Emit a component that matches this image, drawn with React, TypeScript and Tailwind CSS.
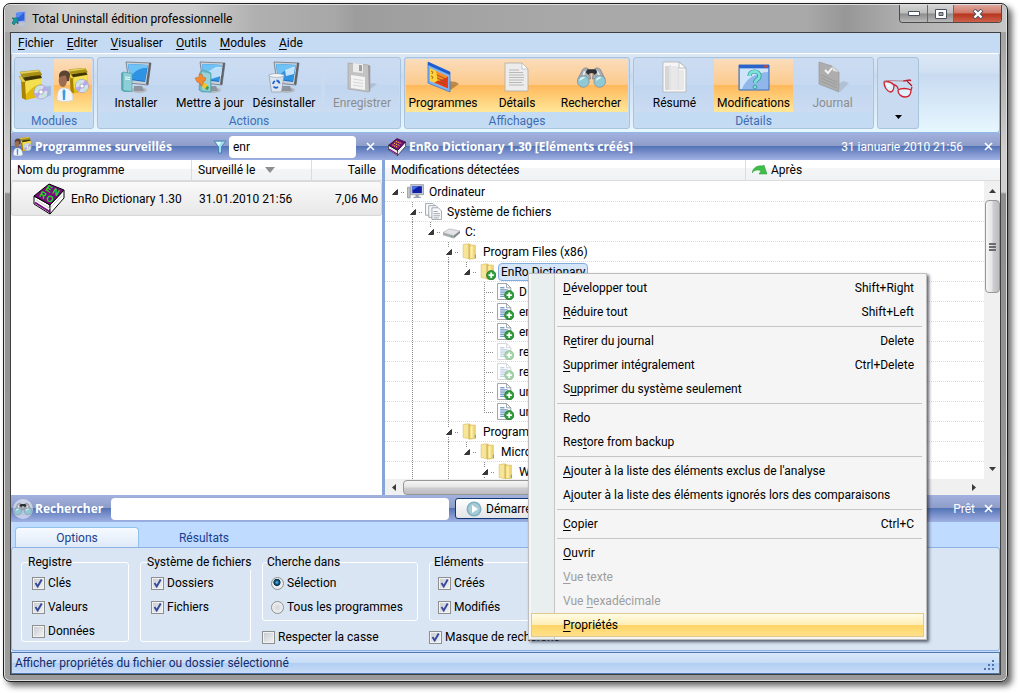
import { useState } from "react";
import type { ReactNode } from "react";
import clsx from "clsx";

/* ---------- helpers ---------- */

// "&" marks the access key of a label
function Accel({ text }: { text: string }) {
  const i = text.indexOf("&");
  if (i < 0) return <span>{text}</span>;
  return (
    <span>
      {text.slice(0, i)}
      <u className="underline-offset-2">{text[i + 1]}</u>
      {text.slice(i + 2)}
    </span>
  );
}

const barClass =
  "bg-[linear-gradient(to_bottom,#a3b1df_0%,#8e9dc8_47%,#5474b8_50%,#7d93cd_75%,#9fb1e3_100%)]";
const barTitle = "whitespace-nowrap font-['Open_Sans',sans-serif] text-[12px] font-bold text-white";

/* ---------- icons ---------- */

function AppIcon() {
  return (
    <svg width="16" height="16" viewBox="0 0 16 16">
      <path d="M4 1l11-1v11l-11 1z" fill="#9fb4ee" />
      <path d="M5.500 2l8-1v8.500l-8 1z" fill="#2f62d8" />
      <path d="M5.500 2l8-1-8 7z" fill="#5c8cf0" />
      <path d="M8 12l4-.5 3 2.500-4 1.500-4-1z" fill="#b9c4d8" />
      <path d="M1 7h6v6l-2-2-2 3-2-2 2-3z" fill="#159a9d" stroke="#0b5e66" strokeWidth=".6" />
    </svg>
  );
}

function Monitor() {
  return (
    <g>
      <ellipse cx="20" cy="29" rx="8" ry="3" fill="#b4b9c0" />
      <path d="M15 25h8l2 5-10 0z" fill="#8d949d" />
      <path d="M7 1l25 1-3 22-19-2z" fill="#c9d0d6" stroke="#6d757e" strokeWidth=".8" />
      <path d="M29 24l3-22-2 0-3 21z" fill="#5b626b" />
      <path d="M9 3l20 1-3 17-15-2z" fill="#1c73c8" />
      <path d="M9 3l20 1-.4 3c-8 0-14 4-17.600 10z" fill="#6ec2f5" />
      <path d="M12 16c4-7 10-9 16-9l-2 13-14-2z" fill="#2f93e4" />
    </g>
  );
}

function InstallIcon() {
  return (
    <svg width="34" height="33" viewBox="0 0 34 33">
      <Monitor />
      <path d="M2 12l2-1 9 2v18l-8 0-3-2z" fill="#5fb0b8" />
      <path d="M4 11l9 1.500v18l-9-1z" fill="#8ccfd6" stroke="#4a98a2" strokeWidth=".6" />
      <path d="M6 16l5 .5M6 18l5 .5" stroke="#e9fbfc" />
    </svg>
  );
}

function UpdateIcon() {
  return (
    <svg width="34" height="33" viewBox="0 0 34 33">
      <Monitor />
      <path d="M16 10l7-4 6 0-1 9-10 3z" fill="#dff0fd" opacity=".8" />
      <path d="M7 11l3-2 8 3v19l-9 0-3-2z" fill="#6fb9c4" stroke="#4b95a0" strokeWidth=".6" />
      <path d="M9 11l8 2v17l-8-1z" fill="#98d3dc" />
      <path d="M2 17l4-1 0-3 3 0 1 3 3 1-1 3-2 0 1 4-3 1-1-3-3-1z" fill="#f08a35" stroke="#c8611b" strokeWidth=".5" />
      <path d="M11 22l3 1 1 3-3 2-3-2z" fill="#f3c52c" />
      <path d="M14 25l2 1-1 3-3-1z" fill="#3a9e48" />
    </svg>
  );
}

function UninstallIcon() {
  return (
    <svg width="34" height="33" viewBox="0 0 34 33">
      <Monitor />
      <path d="M18 9l8-3 2 0-1 7-8 2z" fill="#e3f2fe" opacity=".85" />
      <path d="M2 14h15l-2.500 17h-10z" fill="#dfe6ee" fillOpacity=".93" stroke="#8f9aa8" strokeWidth=".7" />
      <ellipse cx="9.500" cy="14.500" rx="7.500" ry="1.800" fill="#f5f8fb" stroke="#8f9aa8" strokeWidth=".6" />
      <path d="M9.500 19.500a3.500 3.500 0 0 1 3 3M11 26a3.500 3.500 0 0 1-4.500-.5M6 23a3.500 3.500 0 0 1 2-3" fill="none" stroke="#1f63d2" strokeWidth="1.800" />
    </svg>
  );
}

function FloppyIcon() {
  return (
    <svg width="34" height="33" viewBox="0 0 34 33">
      <path d="M24 29l8-6-4-1-5 1z" fill="#a9b6c9" opacity=".7" />
      <path d="M3 2l20 2 2 1v25l-1 1-21-3z" fill="#c2c2c2" stroke="#a3a3a3" strokeWidth=".7" />
      <path d="M23 4l2 1v25l-1 1z" fill="#9a9a9a" />
      <path d="M8 2l10 1v9l-10-1z" fill="#ececec" />
      <path d="M14 4l3 .3v6l-3-.3z" fill="#9f9f9f" />
      <path d="M6 14l14 2v13l-14-2z" fill="#f3f3f3" />
      <path d="M8 18l10 1.500M8 21l10 1.500M8 24l10 1.500" stroke="#cfcfcf" strokeWidth=".8" />
    </svg>
  );
}

function ProgramsIcon() {
  return (
    <svg width="34" height="33" viewBox="0 0 34 33">
      <path d="M23 30l10-7-3-2-8-1z" fill="#a77438" opacity=".75" />
      <path d="M2 1l22 10v20l-22-9z" fill="#7fb4f2" stroke="#3a78d0" strokeWidth=".8" />
      <path d="M2 1l22 10v3l-22-10z" fill="#1d5bd0" />
      <path d="M4 7l18 8.500v12l-18-7.500z" fill="#ffd33b" />
      <path d="M22 15.500v12l-14-6z" fill="#e8391b" />
      <path d="M10 10l12 5.500-10 5z" fill="#f98a2b" />
      <path d="M5 10l2 1-1 2M5 15l2 1-1 2M11 14l9 4M11 17l9 4M11 20l9 4" fill="none" stroke="#8f5510" strokeWidth=".8" />
    </svg>
  );
}

function DetailsIcon() {
  return (
    <svg width="34" height="33" viewBox="0 0 34 33">
      <path d="M5 2h17l6 6v22h-23z" fill="#ececec" stroke="#b0aca6" strokeWidth=".8" />
      <path d="M22 2l6 6h-6z" fill="#fff" stroke="#b5b5b5" strokeWidth=".7" />
      <path d="M9 9h10M9 11.500h14M9 14h15M9 16.500h15M9 19h15M9 21.500h13M9 24h15" stroke="#b2b2b2" strokeWidth=".9" />
    </svg>
  );
}

function Binoculars({ size }: { size: number }) {
  return (
    <svg width={size} height={size} viewBox="0 0 34 33">
      <path d="M7 10c1-4 7-5 8 0l1 8-13 0z" fill="#a7adb3" stroke="#70777e" strokeWidth=".7" />
      <path d="M19 10c1-5 7-4 8 0l4 8-13 0z" fill="#a7adb3" stroke="#70777e" strokeWidth=".7" />
      <path d="M9 10l2 0-2 7-2 0zM22 10h2l3 7h-2z" fill="#e8ecef" />
      <path d="M13 8h8l2 3-3 3-1-2h-4l-1 2-3-3z" fill="#2d3034" />
      <circle cx="8.500" cy="20.500" r="6" fill="#8fc9d6" stroke="#8d979e" strokeWidth="1" />
      <circle cx="25.500" cy="20.500" r="6" fill="#8fc9d6" stroke="#8d979e" strokeWidth="1" />
      <path d="M4.500 20a4 4 0 0 1 6-3.500zM21.500 20a4 4 0 0 1 6-3.500z" fill="#dcf4f8" />
    </svg>
  );
}

function SummaryIcon() {
  return (
    <svg width="34" height="33" viewBox="0 0 34 33">
      <path d="M5 1h16l7 6v24h-23z" fill="#f6f6f6" stroke="#b4b4b4" strokeWidth=".8" />
      <path d="M21 1l7 6h-7z" fill="#fff" stroke="#a6a6a6" strokeWidth=".7" />
      <path d="M7 5h4v24h-4z" fill="#d6d6d6" />
      <path d="M13 5h6v24h-6zM21 9h5v20h-5z" fill="#e8e8e8" />
      <path d="M12 4v25M20 6v23" stroke="#c6c6c6" strokeWidth=".8" />
    </svg>
  );
}

function ChangesIcon() {
  return (
    <svg width="34" height="33" viewBox="0 0 34 33">
      <path d="M2 4h30v25h-30z" fill="#8fb7ea" stroke="#3d6fbd" strokeWidth="1" />
      <path d="M2 4h30v3h-30z" fill="#2a63cc" />
      <path d="M27 4.500h4v2h-4z" fill="#d9442a" />
      <path d="M3 8h28v3c-14 1-22 7-26 17h-2z" fill="#cfe3fa" />
      <path d="M12.500 15c0-6 10-6 10 0 0 4-4.500 3-4.500 7" fill="none" stroke="#2f8f94" strokeWidth="4.200" />
      <path d="M12.500 15c0-6 10-6 10 0 0 4-4.500 3-4.500 7" fill="none" stroke="#7be4d8" strokeWidth="2.800" />
      <circle cx="18" cy="26" r="1.900" fill="#7be4d8" stroke="#2f8f94" strokeWidth=".8" />
    </svg>
  );
}

function JournalIcon() {
  return (
    <svg width="34" height="33" viewBox="0 0 34 33">
      <path d="M24 31l9-9-5-2-5 2z" fill="#aab6c8" opacity=".7" />
      <path d="M3 1l13 4 7 6v20l-20-8z" fill="#adadad" stroke="#999" strokeWidth=".7" />
      <path d="M16 5l7 6-6-1z" fill="#dedede" />
      <path d="M9 9l3 3 4-5" fill="none" stroke="#f4f4f4" strokeWidth="2" />
      <path d="M5 14l16 7M5 17l16 7M5 20l16 7" stroke="#9a9a9a" strokeWidth=".9" />
    </svg>
  );
}

function GlassesIcon() {
  return (
    <svg width="32" height="24" viewBox="0 0 32 24">
      <g fill="#dff1fb" stroke="#cf2130" strokeWidth="1.300">
        <path d="M2 5c3-1 7 0 10 3 0 4-1 7-4 7-3-1-6-5-6-10z" />
        <path d="M16 13c3-2 9-2 13 0 0 4-2 7-6 7-4 0-7-3-7-7z" />
        <path d="M12 8c2 0 4 2 4 4M21 4l7-1 1 1M24 3l6 6M29 13l1-3" fill="none" />
      </g>
      <path d="M2 4c7-1 12 0 20 0" fill="none" stroke="#b9858f" strokeWidth="1" />
      <path d="M24 3l6 6" stroke="#8c1b26" strokeWidth="1" />
      <path d="M4 6l5 3-4 1z" fill="#fff" />
    </svg>
  );
}

function BoxShape() {
  return (
    <g>
      <path d="M2 8l5 3v19l-4-2z" fill="#a98200" />
      <path d="M6 11l17-3v18l-16 4z" fill="#e0b90a" />
      <path d="M6 11l17-3v6c-7 1-12 5-16 11z" fill="#f3df4f" />
      <path d="M2 8l19-4 2 4-17 3z" fill="#3f3403" />
      <path d="M1 2l19-2 3 5-20 2z" fill="#a89112" stroke="#8a7509" strokeWidth=".4" />
      <path d="M1 2l19-2 .8 1.500-19 2.500z" fill="#e3cf58" />
      <path d="M0 6l3 1 4 5-4 0z" fill="#e9d24a" stroke="#ad9210" strokeWidth=".4" />
    </g>
  );
}

function Disc() {
  return (
    <g>
      <circle r="7" fill="#d9dcf2" stroke="#9a9fc4" strokeWidth=".7" />
      <path d="M0 0l-6-3a7 7 0 0 1 4-3.500zM0 0l6 3a7 7 0 0 1-4 3.500z" fill="#c2e6d6" />
      <path d="M0 0l3-6a7 7 0 0 1 3.500 4.500zM0 0l-3 6a7 7 0 0 1-3.500-4.500z" fill="#b3a8ea" />
      <circle r="2.200" fill="#fff" stroke="#8b8fa5" strokeWidth=".7" />
    </g>
  );
}

function BoxIcon() {
  return (
    <svg width="34" height="34" viewBox="0 0 34 34">
      <path d="M25 19l8-1v9l-8 4z" fill="#8fa6c8" opacity=".6" />
      <g transform="translate(1 2)">
        <BoxShape />
      </g>
      <g transform="translate(23 24)">
        <Disc />
      </g>
    </svg>
  );
}

function UserBoxIcon({ size }: { size: number }) {
  return (
    <svg width={size} height={size} viewBox="0 0 34 34">
      <g transform="translate(12 0) scale(.85)">
        <BoxShape />
      </g>
      <g transform="translate(26 18) scale(.95)">
        <Disc />
      </g>
      <path d="M1 32c0-9 2-12 7-12s9 3 9 12c-4 2-12 2-16 0z" fill="#f2f5fa" stroke="#c4ccd8" strokeWidth=".6" />
      <path d="M8 21l1.500 2-.5 9h-2l-.5-9z" fill="#3c9ae0" />
      <path d="M3 8c0-7 11-7 11-1l-1 6-9 1z" fill="#5b4334" />
      <path d="M3 10c2-2 5-3 7-2 2 5 0 11-3 11s-5-4-4-9z" fill="#9c6d50" />
    </svg>
  );
}

function BookIcon({ size, letters = false }: { size: number; letters?: boolean }) {
  return (
    <svg width={size} height={size} viewBox="0 0 32 32">
      <path d="M1 13l16 9v9l-16-10z" fill="#fff" stroke="#000" strokeWidth="1" />
      <path d="M17 22l14-15v8l-14 16z" fill="#fff" stroke="#000" strokeWidth="1" />
      <path d="M2 19.500l15 9.500" stroke="#7b0a7f" strokeWidth="2" />
      <path d="M3 17l14 8.500 12-13" fill="none" stroke="#b5b5b5" strokeWidth=".8" />
      <path d="M1 13l15-12 15 6-14 15z" fill="#7b0a7f" stroke="#000" strokeWidth="1" />
      {letters ? (
        <g
          fill="#18e218"
          fontFamily="Liberation Sans, sans-serif"
          fontWeight="700"
          fontSize="9"
          textAnchor="middle"
          dominantBaseline="central"
        >
          <text transform="translate(16 6) rotate(30)">E</text>
          <text transform="translate(23 9) rotate(30)">N</text>
          <text transform="translate(10 12) rotate(30)">R</text>
          <text transform="translate(17 16) rotate(30)">O</text>
        </g>
      ) : (
        <path d="M14 6l10 4M11 9l10 5M8 12l10 5" stroke="#f2e22c" strokeWidth="2" strokeDasharray="2 1.500" />
      )}
    </svg>
  );
}

function FunnelIcon() {
  return (
    <svg width="14" height="14" viewBox="0 0 14 14">
      <path d="M1 1h12l-4.500 6v6h-3v-6z" fill="#9fdcf0" stroke="#3f7fae" strokeWidth=".9" />
      <path d="M3 2h5l-2 4z" fill="#e9fbff" />
    </svg>
  );
}

function CloseGlyph() {
  return (
    <svg width="9" height="9" viewBox="0 0 9 9">
      <path d="M1 1l7 7M8 1l-7 7" stroke="#fff" strokeWidth="1.600" />
    </svg>
  );
}

function GreenArrow() {
  return (
    <svg width="16" height="10" viewBox="0 0 16 10">
      <path d="M0 8c1-5 5-8 10-7l2-1 3 9h-8l2-3c-3-2-7-1-9 2z" fill="#3fbf4a" stroke="#2b9636" strokeWidth=".5" />
    </svg>
  );
}

function PlusBadge() {
  return (
    <g>
      <circle cx="11.500" cy="11.500" r="4.400" fill="#2e9e3a" stroke="#1b7427" strokeWidth=".7" />
      <path d="M11.500 9v5M9 11.500h5" stroke="#fff" strokeWidth="1.700" />
    </g>
  );
}

function FolderShape() {
  return (
    <g>
      <path d="M2 1.500l5-.8v14l-5-1z" fill="#f7e69a" stroke="#d3b455" strokeWidth=".5" />
      <path d="M7 .7h2v14.500h-2z" fill="#dfc05c" />
      <path d="M8 2h5.500v12.500l-5.500.8z" fill="#f2d976" stroke="#cfae4c" strokeWidth=".5" />
      <path d="M9 3h2v11h-2z" fill="#faeeb4" />
      <path d="M13 11h1v3h-1z" fill="#5ea0d8" />
    </g>
  );
}

type TreeIconKind = "pc" | "pages" | "drive" | "folder" | "folderAdd" | "file" | "fileDim";

function TreeIcon({ kind }: { kind: TreeIconKind }) {
  return (
    <svg width="17" height="17" viewBox="0 0 16 16" className={clsx("shrink-0", kind === "fileDim" && "opacity-45")}>
      {kind === "pc" && (
        <g>
          <path d="M.5 4h2.500v10h-2.500z" fill="#c4c8cf" stroke="#7c828c" strokeWidth=".6" />
          <path d="M3.500 1.500h12v9.500h-12z" fill="#c9cdd6" stroke="#7c828c" strokeWidth=".6" />
          <path d="M5 3h9v6.500h-9z" fill="#0f1fa8" />
          <path d="M5 3h6l-6 4z" fill="#4a70e8" />
          <path d="M8 11h3v2h2v1h-7v-1h2z" fill="#9aa0ab" />
        </g>
      )}
      {kind === "pages" && (
        <g fill="#f7f9fb" stroke="#8a9099" strokeWidth=".7">
          <path d="M.5.500h7l1 1v10h-8z" />
          <path d="M3.500 2.500h7l1 1v10h-8z" />
          <path d="M6.500 4.500h6l3 3v8h-9z" />
          <path d="M8 8h4M8 10h6M8 12h6M8 14h5" />
        </g>
      )}
      {kind === "drive" && (
        <g>
          <path d="M0 9l6-3.500 10 2-6 4.500z" fill="#e2e4e6" stroke="#9b9fa4" strokeWidth=".5" />
          <path d="M0 9l10 3v2.500l-10-3z" fill="#a9adb2" />
          <path d="M10 12l6-4.500v2l-6 5z" fill="#7f8388" />
          <path d="M7.500 12.300l1.500.5" stroke="#3fc04a" strokeWidth="1" />
        </g>
      )}
      {kind === "folder" && <FolderShape />}
      {kind === "folderAdd" && (
        <g>
          <FolderShape />
          <PlusBadge />
        </g>
      )}
      {(kind === "file" || kind === "fileDim") && (
        <g>
          <path d="M.5.500h8.500l4 4v11h-12.500z" fill="#fff" stroke="#8f959d" strokeWidth=".8" />
          <path d="M9 .5v4h4" fill="none" stroke="#8f959d" strokeWidth=".8" />
          <path d="M3 4.500h4M3 6.500h7M3 8.500h6M3 10.500h4M3 12.500h4" stroke="#3b6fb4" strokeWidth=".9" />
          <PlusBadge />
        </g>
      )}
    </svg>
  );
}

/* ---------- tree ---------- */

// one guide per indent level: _ empty, | line, T branch, L last branch,
// a arrow, u arrow with line above, b arrow with line above and below
function Guide({ kind }: { kind: string }) {
  const dots = { stroke: "#8a8a8a", strokeDasharray: "1 1", strokeWidth: 1 };
  return (
    <svg width="18" height="20" viewBox="0 0 18 20" className="shrink-0">
      {(kind === "|" || kind === "T") && <path d="M8.500 0v20" {...dots} />}
      {kind === "L" && <path d="M8.500 0v11" {...dots} />}
      {(kind === "T" || kind === "L") && <path d="M10 10.500h8" {...dots} />}
      {(kind === "u" || kind === "b") && <path d="M8.500 0v5" {...dots} />}
      {kind === "b" && <path d="M8.500 15v5" {...dots} />}
      {"aub".includes(kind) && (
        <>
          <path d="M11.500 7.500v5h-5z" fill="#3a3a3a" stroke="#1c1c1c" strokeWidth=".8" />
          <path d="M15 10.500h3" {...dots} />
        </>
      )}
    </svg>
  );
}

type Node = { guides: string; icon: TreeIconKind; label: string; selected?: boolean };

const tree: Node[] = [
  { guides: "a", icon: "pc", label: "Ordinateur" },
  { guides: "_b", icon: "pages", label: "Système de fichiers" },
  { guides: "_|u", icon: "drive", label: "C:" },
  { guides: "_|_b", icon: "folder", label: "Program Files (x86)" },
  { guides: "_|_|u", icon: "folderAdd", label: "EnRo Dictionary", selected: true },
  { guides: "_|_|_T", icon: "file", label: "D" },
  { guides: "_|_|_T", icon: "file", label: "en" },
  { guides: "_|_|_T", icon: "file", label: "en" },
  { guides: "_|_|_T", icon: "fileDim", label: "re" },
  { guides: "_|_|_T", icon: "fileDim", label: "re" },
  { guides: "_|_|_T", icon: "file", label: "un" },
  { guides: "_|_|_L", icon: "file", label: "un" },
  { guides: "_|_b", icon: "folder", label: "Program" },
  { guides: "_|_|u", icon: "folder", label: "Micro" },
  { guides: "_|_|_b", icon: "folder", label: "W" },
];

function Tree() {
  return (
    <ul role="tree" className="min-w-0 flex-1 overflow-hidden bg-white pt-px">
      {tree.map((n, i) => (
        <li key={i} role="treeitem" className="flex h-5 items-center border-b border-dotted border-[#dcdcdc] pl-px">
          {n.guides.split("").map((g, k) => (
            <Guide key={k} kind={g} />
          ))}
          <span className="ml-[3px] flex">
            <TreeIcon kind={n.icon} />
          </span>
          <span
            className={clsx(
              "ml-0.5 rounded-sm border px-0.5 leading-4",
              n.selected ? "border-[#84acdd] bg-[#d5e6fb]" : "border-transparent"
            )}
          >
            {n.label}
          </span>
        </li>
      ))}
    </ul>
  );
}

/* ---------- ribbon ---------- */

function Group({ title, children }: { title?: string; children: ReactNode }) {
  return (
    <div className="flex flex-col rounded-[3px] border border-[#a9c3dd] bg-[#c8dbf1] p-px">
      <div className="flex flex-1 gap-1">{children}</div>
      {title && <div className="h-[15px] bg-[#c3dbf3] text-center leading-[18px] text-[#3e6db5]">{title}</div>}
    </div>
  );
}

const activeTool = "bg-[linear-gradient(to_bottom,#fbdcbb_0%,#fdca8b_49%,#ffb85b_50%,#ffe798_100%)]";
const idleTool = "bg-[linear-gradient(to_bottom,#cbdcf2_0%,#c6d9f1_49%,#c0d5ef_50%,#cbdcf2_100%)]";

function Tool(props: { label: string; icon: ReactNode; active?: boolean; disabled?: boolean; wide?: boolean }) {
  return (
    <button
      type="button"
      disabled={props.disabled}
      className={clsx(
        "flex flex-col items-center whitespace-nowrap pt-0.5",
        props.wide ? "w-[79px]" : "w-[74px]",
        props.active ? activeTool : idleTool,
        props.disabled ? "text-[#8d8d8d]" : "text-black"
      )}
    >
      {props.icon}
      <span className="leading-[18px]">{props.label}</span>
    </button>
  );
}

function Ribbon() {
  return (
    <div className="flex h-20 gap-[3px] rounded-[3px] border border-[#8fb8e6] border-t-white bg-[linear-gradient(to_bottom,#dce7f5_0%,#cfdff2_25%,#c8daf0_26%,#e6f7ff_100%)] px-0.5 pt-[3px] pb-[3px]">
      <Group title="Modules">
        <div className="flex">
          <button type="button" aria-label="Programmes installés" className={clsx("flex w-[38px] justify-center pt-[9px]", idleTool)}>
            <BoxIcon />
          </button>
          <button type="button" aria-label="Programmes surveillés" className={clsx("flex w-[38px] justify-center pt-[9px]", activeTool)}>
            <UserBoxIcon size={34} />
          </button>
        </div>
      </Group>
      <Group title="Actions">
        <div className="flex">
          <Tool label="Installer" icon={<InstallIcon />} />
          <Tool label="Mettre à jour" icon={<UpdateIcon />} />
          <Tool label="Désinstaller" icon={<UninstallIcon />} />
        </div>
        <Tool label="Enregistrer" icon={<FloppyIcon />} disabled />
      </Group>
      <Group title="Affichages">
        <div className="flex">
          <Tool label="Programmes" icon={<ProgramsIcon />} active />
          <Tool label="Détails" icon={<DetailsIcon />} active />
          <Tool label="Rechercher" icon={<Binoculars size={33} />} active />
        </div>
      </Group>
      <Group title="Détails">
        <div className="flex">
          <Tool label="Résumé" icon={<SummaryIcon />} wide />
          <Tool label="Modifications" icon={<ChangesIcon />} wide active />
          <Tool label="Journal" icon={<JournalIcon />} wide disabled />
        </div>
      </Group>
      <Group>
        <button type="button" aria-label="Lunettes" className="flex w-[38px] flex-col items-center justify-between pt-[18px] pb-2">
          <GlassesIcon />
          <svg width="7" height="4" viewBox="0 0 7 4">
            <path d="M0 0h7l-3.500 4z" fill="#000" />
          </svg>
        </button>
      </Group>
    </div>
  );
}

/* ---------- form bits ---------- */

function Check({ label, on }: { label: string; on?: boolean }) {
  const [checked, setChecked] = useState(!!on);
  return (
    <label className="flex h-6 items-center gap-[3px] whitespace-nowrap">
      <span className="relative flex">
        <input
          type="checkbox"
          checked={checked}
          onChange={() => setChecked(!checked)}
          className="size-[13px] appearance-none border border-[#8e8f8f] bg-[linear-gradient(135deg,#c6cad0,#f4f4f4)] shadow-[inset_0_0_0_1px_#f2f2f2]"
        />
        {checked && (
          <svg width="13" height="13" viewBox="0 0 13 13" className="pointer-events-none absolute inset-0">
            <path d="M3.500 6l2.200 3.500 4-7" fill="none" stroke="#33479b" strokeWidth="1.900" />
          </svg>
        )}
      </span>
      {label}
    </label>
  );
}

function Radio({ label, on }: { label: string; on?: boolean }) {
  return (
    <label className="flex h-6 items-center gap-[3px] whitespace-nowrap">
      <input
        type="radio"
        name="scope"
        defaultChecked={on}
        className="size-[13px] appearance-none rounded-full border border-[#8e8f8f] bg-[radial-gradient(circle,#d2d5d8_0%,#f4f4f4_80%)] checked:bg-[radial-gradient(circle_at_45%_40%,#5fc4ee_0%,#0d5a86_22%,#0a2c46_36%,#e9edf0_44%)]"
      />
      {label}
    </label>
  );
}

function Box({ legend, tall, children, className }: { legend: string; tall?: boolean; children: ReactNode; className: string }) {
  return (
    <fieldset className={clsx("min-w-0 rounded-[3px] border border-white", tall ? "h-[88px] pl-2.5" : "h-[67px] pl-2", className)}>
      <legend className="-ml-1 whitespace-nowrap leading-4">{legend}</legend>
      <div className="pt-px">{children}</div>
    </fieldset>
  );
}

/* ---------- context menu ---------- */

type Item = { label: string; keys?: string; disabled?: boolean; hot?: boolean } | null;

const menu: Item[] = [
  { label: "&Développer tout", keys: "Shift+Right" },
  { label: "&Réduire tout", keys: "Shift+Left" },
  null,
  { label: "R&etirer du journal", keys: "Delete" },
  { label: "&Supprimer intégralement", keys: "Ctrl+Delete" },
  { label: "S&upprimer du système seulement" },
  null,
  { label: "Redo" },
  { label: "Res&tore from backup" },
  null,
  { label: "&Ajouter à la liste des éléments exclus de l'analyse" },
  { label: "A&jouter à la liste des éléments ignorés lors des comparaisons" },
  null,
  { label: "&Copier", keys: "Ctrl+C" },
  null,
  { label: "&Ouvrir" },
  { label: "&Vue texte", disabled: true },
  { label: "Vue &hexadécimale", disabled: true },
  { label: "&Propriétés", hot: true },
];

function ContextMenu() {
  return (
    <div
      role="menu"
      className="absolute top-[273px] left-[528px] flex w-[399px] flex-col border border-[#bdbdbd] bg-[linear-gradient(to_right,#f5f5f5_2px,#e9eeee_2px,#e9eeee_25px,#c5c5c5_25px,#c5c5c5_26px,#f5f5f5_26px)] p-0.5 shadow-[2px_2px_3px_rgba(40,45,60,0.75)]"
    >
      {menu.map((m, i) =>
        m ? (
          <button
            key={i}
            type="button"
            role="menuitem"
            disabled={m.disabled}
            className={clsx(
              "flex h-6 items-center justify-between border pr-[9px] pl-[31px]",
              m.hot
                ? "border-[#dfca8c] bg-[linear-gradient(to_bottom,#fffbe6_0%,#ffeeb5_49%,#ffd465_50%,#ffe08a_100%)]"
                : "border-transparent",
              m.disabled && "text-[#9d9d9d]"
            )}
          >
            <Accel text={m.label} />
            <span>{m.keys}</span>
          </button>
        ) : (
          <div key={i} role="separator" className="my-0.5 mr-0.5 ml-[26px] h-px bg-[#c5c5c5]" />
        )
      )}
    </div>
  );
}

/* ---------- panels ---------- */

const headClass = "bg-[linear-gradient(to_bottom,#ffffff_0%,#ffffff_40%,#f4f5f6_42%,#f1f2f4_100%)]";

function ProgramList() {
  return (
    <section className="flex w-[371px] flex-col bg-white">
      <div className={clsx("flex h-[27px] items-center pr-[7px] pl-0.5", barClass)}>
        <UserBoxIcon size={19} />
        <h2 className={clsx("ml-[3px] flex-1", barTitle)}>Programmes surveillés</h2>
        <FunnelIcon />
        <input aria-label="Filtre" defaultValue="enr" className="ml-0.5 h-[22px] w-[127px] rounded-sm bg-white px-1 outline-none" />
        <button type="button" aria-label="Fermer" className="ml-2.5">
          <CloseGlyph />
        </button>
      </div>
      <table className="w-full table-fixed border-separate border-spacing-0">
        <colgroup>
          <col className="w-[181px]" />
          <col className="w-[120px]" />
          <col />
        </colgroup>
        <thead>
          <tr className={clsx("h-[21px] text-left", headClass)}>
            <th className="border-r border-b border-[#dcdcdc] pl-1.5 font-normal">Nom du programme</th>
            <th className="border-r border-b border-[#dcdcdc] pl-1.5 font-normal">
              <span className="flex items-center gap-2.5">
                Surveillé le
                <svg width="10" height="6" viewBox="0 0 10 6">
                  <path d="M0 0h10l-5 6z" fill="#8e8e8e" />
                </svg>
              </span>
            </th>
            <th className="border-b border-[#dcdcdc] pr-1.5 text-right font-normal">Taille</th>
          </tr>
        </thead>
        <tbody>
          <tr className="h-[35px] bg-[linear-gradient(to_bottom,#fafafa,#e7e7e7)]">
            <td className="rounded-l-[3px] border border-r-0 border-[#d9d9d9]">
              <span className="flex items-center gap-1.5 whitespace-nowrap pl-[21px]">
                <BookIcon size={32} letters />
                EnRo Dictionary 1.30
              </span>
            </td>
            <td className="border-y border-[#d9d9d9] pl-[7px]">31.01.2010 21:56</td>
            <td className="rounded-r-[3px] border border-l-0 border-[#d9d9d9] pr-[3px] text-right whitespace-nowrap">7,06 Mo</td>
          </tr>
        </tbody>
      </table>
    </section>
  );
}

const thumbV = "bg-[linear-gradient(to_right,#f6f6f6_0%,#e4e4e6_48%,#cfcfd2_52%,#bcbcc0_100%)]";
const thumbH = "bg-[linear-gradient(to_bottom,#f6f6f6_0%,#e4e4e6_48%,#cfcfd2_52%,#bcbcc0_100%)]";

function ChangesPanel() {
  return (
    <section className="flex min-w-0 flex-1 flex-col">
      <div className={clsx("flex h-[27px] items-center pr-[7px] pl-1.5", barClass)}>
        <BookIcon size={18} />
        <h2 className={clsx("ml-[3px] flex-1", barTitle)}>EnRo Dictionary 1.30 [Eléments créés]</h2>
        <span className="text-white">31 ianuarie 2010 21:56</span>
        <button type="button" aria-label="Fermer" className="ml-[21px]">
          <CloseGlyph />
        </button>
      </div>
      <div className="flex min-h-0 flex-1 flex-col border-l-[3px] border-[#87a5d8]">
        <div className={clsx("flex h-[21px] items-center border-b border-[#dcdcdc]", headClass)}>
          <div className="w-[360px] pl-1.5">Modifications détectées</div>
          <div className="flex h-full flex-1 items-center gap-[3px] border-l border-[#dcdcdc] pl-1.5">
            <GreenArrow />
            Après
          </div>
        </div>
        <div className="flex min-h-0 flex-1">
          <Tree />
          <div className="flex w-4 flex-col items-center bg-[#f0f0f0]">
            <div className="flex h-[19px] items-center">
              <svg width="7" height="4" viewBox="0 0 7 4">
                <path d="M3.500 0l3.500 4h-7z" fill="#3a3a3a" />
              </svg>
            </div>
            <div className={clsx("flex h-[93px] w-[15px] flex-col items-center justify-center gap-px rounded-sm border border-[#979797]", thumbV)}>
              <i className="h-0.5 w-[7px] bg-[#6c6c6c]" />
              <i className="h-0.5 w-[7px] bg-[#6c6c6c]" />
              <i className="h-0.5 w-[7px] bg-[#6c6c6c]" />
            </div>
            <svg width="7" height="4" viewBox="0 0 7 4" className="mt-auto mb-2">
              <path d="M0 0h7l-3.500 4z" fill="#3a3a3a" />
            </svg>
          </div>
        </div>
        <div className="flex h-4 items-center bg-[#f0f0f0]">
          <svg width="4" height="7" viewBox="0 0 4 7" className="mx-[7px]">
            <path d="M4 0v7l-4-3.500z" fill="#3a3a3a" />
          </svg>
          <div className={clsx("h-[15px] w-[430px] rounded-sm border border-[#979797]", thumbH)} />
          <svg width="4" height="7" viewBox="0 0 4 7" className="mr-6 ml-auto">
            <path d="M0 0v7l4-3.500z" fill="#3a3a3a" />
          </svg>
        </div>
      </div>
    </section>
  );
}

function SearchPanel() {
  return (
    <section>
      <div className={clsx("flex h-[27px] items-center pr-[7px] pl-0.5", barClass)}>
        <span className="flex rounded-full bg-white/50">
          <Binoculars size={20} />
        </span>
        <h2 className={clsx("ml-0.5 w-[76px]", barTitle)}>Rechercher</h2>
        <input aria-label="Rechercher" className="h-[22px] w-[338px] rounded-sm bg-white px-1 outline-none" />
        <button
          type="button"
          className="ml-1.5 flex h-[21px] items-center gap-1 rounded-[3px] border border-[#12366f] bg-[linear-gradient(to_bottom,#ffffff,#e3e4e8)] px-2.5"
        >
          <svg width="16" height="16" viewBox="0 0 16 16">
            <circle cx="8" cy="8" r="7.500" fill="#7fb0bf" />
            <circle cx="8" cy="8" r="6" fill="#a5cbd6" />
            <path d="M6 4l6 4-6 4z" fill="#fff" />
          </svg>
          Démarrer
        </button>
        <span className="ml-auto text-white">Prêt</span>
        <button type="button" aria-label="Fermer" className="ml-[9px]">
          <CloseGlyph />
        </button>
      </div>

      <div className="bg-[#bfdbff]">
        <div role="tablist" className="flex h-[25px] items-end pl-1 text-[#1b3f8f]">
          <button
            type="button"
            role="tab"
            className="h-5 w-[124px] rounded-t border border-b-0 border-[#8fc3ee] bg-[linear-gradient(to_bottom,#f6faff,#dfeaf8)] pt-px"
          >
            Options
          </button>
          <button type="button" role="tab" className="h-5 w-[130px] pt-px">
            Résultats
          </button>
        </div>
        <div className="flex h-[104px] items-start gap-[11px] rounded-[3px] border border-[#8db2e3] bg-[#d9e5f3] pt-1.5 pl-[9px]">
          <Box legend="Registre" tall className="w-[108px]">
            <Check label="Clés" on />
            <Check label="Valeurs" on />
            <Check label="Données" />
          </Box>
          <Box legend="Système de fichiers" tall className="w-[111px]">
            <Check label="Dossiers" on />
            <Check label="Fichiers" on />
          </Box>
          <div>
            <Box legend="Cherche dans" className="w-[156px]">
              <Radio label="Sélection" on />
              <Radio label="Tous les programmes" />
            </Box>
            <div className="mt-1">
              <Check label="Respecter la casse" />
            </div>
          </div>
          <div>
            <Box legend="Eléments" className="w-[156px]">
              <Check label="Créés" on />
              <Check label="Modifiés" on />
            </Box>
            <div className="mt-1">
              <Check label="Masque de recherche" on />
            </div>
          </div>
        </div>
      </div>
    </section>
  );
}

/* ---------- window ---------- */

const menuBar = ["&Fichier", "&Editer", "&Visualiser", "&Outils", "&Modules", "&Aide"];

export default function App() {
  return (
    <div className="relative h-screen overflow-hidden bg-white pt-[3px] pr-[12px] pb-[11px] pl-[3px] font-['Roboto',sans-serif] text-[12px] text-black">
      <div className="flex h-full flex-col rounded-[7px] border border-[#1e1e1e] bg-[linear-gradient(to_bottom,#a9a9a9_0px,#a3a3a3_30px,#cfcfcf_150px,#d0d0d0_188px,#8f8f8f_190px,#9b9b9b_100%)] shadow-[inset_0_0_0_1px_#dedede,4px_4px_6px_rgba(0,0,0,0.6)]">
        <header className="mx-px mt-px flex h-[27px] items-start rounded-t-[6px] bg-[linear-gradient(to_right,#b4b4b4_0%,#d2d2d2_6%,#cecece_19%,#b0b0b0_25%,#a7a7a7_33%,#9d9d9d_35%,#a8a8a8_55%,#a9a9a9_80%,#979797_84%,#b0b0b0_90%,#c6c6c6_100%)]">
          <div className="flex h-[27px] flex-1 items-center gap-[5px] pl-1.5">
            <AppIcon />
            <h1>Total Uninstall édition professionnelle</h1>
          </div>
          <div className="mr-1 flex h-[18px] overflow-hidden rounded-b border border-t-0 border-[#4b4b4b]">
            <button
              type="button"
              aria-label="Réduire"
              className="grid w-[28px] place-items-center border-r border-[#6a6a6a] bg-[linear-gradient(to_bottom,#d5d5d5_0%,#bdbdbd_48%,#8d8d8d_52%,#b9b9b9_100%)]"
            >
              <svg width="12" height="5" viewBox="0 0 12 5">
                <path d="M.5.500h11v4h-11z" fill="#fff" stroke="#4c5160" />
              </svg>
            </button>
            <button
              type="button"
              aria-label="Agrandir"
              className="grid w-[26px] place-items-center border-r border-[#6a6a6a] bg-[linear-gradient(to_bottom,#d5d5d5_0%,#bdbdbd_48%,#8d8d8d_52%,#b9b9b9_100%)]"
            >
              <svg width="12" height="10" viewBox="0 0 12 10">
                <path d="M.5.500h11v9h-11z" fill="#fff" stroke="#4c5160" />
                <path d="M4 3.500h4v3h-4z" fill="#a5a5a5" stroke="#4c5160" />
              </svg>
            </button>
            <button
              type="button"
              aria-label="Quitter"
              className="grid w-[47px] place-items-center bg-[linear-gradient(to_bottom,#dfa79d_0%,#cf7665_48%,#b5341d_52%,#d0604a_100%)]"
            >
              <svg width="12" height="10" viewBox="0 0 12 10">
                <path d="M2 1l8 8M10 1l-8 8" stroke="#4c5160" strokeWidth="4" />
                <path d="M2.500 1.500l7 7M9.500 1.500l-7 7" stroke="#fff" strokeWidth="2.400" />
              </svg>
            </button>
          </div>
        </header>

        <div className="mx-[6px] mb-[6px] flex min-h-0 flex-1 flex-col border border-[#3f3f3f] bg-[#bfdbff]">
          <nav className="flex h-5 items-center gap-[13px] bg-[#c4dbf3] px-[7px]">
            {menuBar.map((m) => (
              <button key={m} type="button">
                <Accel text={m} />
              </button>
            ))}
          </nav>
          <Ribbon />
          <main className="flex min-h-0 flex-1">
            <ProgramList />
            <ChangesPanel />
          </main>
          <SearchPanel />
          <footer className="mt-px flex h-[22px] items-center justify-between border border-[#4f77ae] bg-[linear-gradient(to_bottom,#d9e7f9_0%,#c9ddf7_48%,#b1cef3_52%,#c8dcf6_100%)] pr-1 pl-[3px] text-[#132a6b]">
            <span>Afficher propriétés du fichier ou dossier sélectionné</span>
            <svg width="11" height="11" viewBox="0 0 11 11" className="mb-0.5 self-end" fill="#4a74b4">
              <path d="M8 0h2v2h-2zM4 4h2v2h-2zM8 4h2v2h-2zM0 8h2v2h-2zM4 8h2v2h-2zM8 8h2v2h-2z" />
            </svg>
          </footer>
        </div>
      </div>
      <ContextMenu />
    </div>
  );
}
